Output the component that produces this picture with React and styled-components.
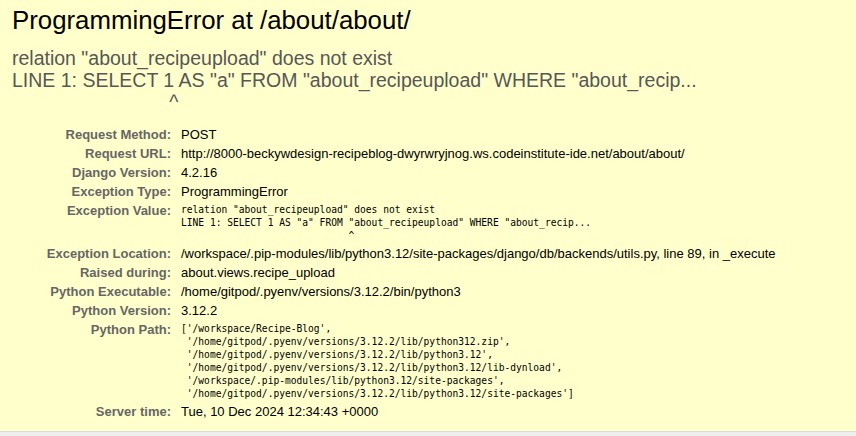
import React from 'react'
import styled, { createGlobalStyle } from 'styled-components'

const GlobalStyle = createGlobalStyle`
    html, body {
        margin: 0;
        padding: 0;
    }
    body {
        background: #eee;
        color: #000;
        font: 13px 'Liberation Sans', Arial, sans-serif;
    }
`

const Summary = styled.div`
    background: #ffc;
    border-bottom: 1px solid #ddd;
    padding: 5px 12px 10px 12px;
`

const Title = styled.h1`
    margin: 0;
    font-size: 25.8px;
    font-weight: normal;
    line-height: 30px;
`

const ExceptionValue = styled.pre`
    margin: 12px 0 12px 0;
    font-family: 'Liberation Sans', Arial, sans-serif;
    font-size: 19.5px;
    line-height: 22px;
    color: #575757;
    white-space: pre-wrap;
`

const Meta = styled.div`
    display: grid;
    grid-template-columns: 159px 1fr;
    column-gap: 10px;
    line-height: 15px;
`

const Label = styled.div`
    padding: 2px 0;
    text-align: right;
    font-weight: bold;
    color: #666;
`

const Value = styled.div`
    padding: 2px 0;
`

const Code = styled.pre`
    margin: 0;
    font-family: 'DejaVu Sans Mono', 'Liberation Mono', monospace;
    font-size: 9.6px;
    line-height: 13px;
    white-space: pre-wrap;
`

const valueText = `relation "about_recipeupload" does not exist
LINE 1: SELECT 1 AS "a" FROM "about_recipeupload" WHERE "about_recip...
                             ^`

const sysPath = `['/workspace/Recipe-Blog',
 '/home/gitpod/.pyenv/versions/3.12.2/lib/python312.zip',
 '/home/gitpod/.pyenv/versions/3.12.2/lib/python3.12',
 '/home/gitpod/.pyenv/versions/3.12.2/lib/python3.12/lib-dynload',
 '/workspace/.pip-modules/lib/python3.12/site-packages',
 '/home/gitpod/.pyenv/versions/3.12.2/lib/python3.12/site-packages']`

const ROWS = [
    ['Request Method:', 'POST'],
    ['Request URL:', 'http://8000-beckywdesign-recipeblog-dwyrwryjnog.ws.codeinstitute-ide.net/about/about/'],
    ['Django Version:', '4.2.16'],
    ['Exception Type:', 'ProgrammingError'],
    ['Exception Value:', valueText, true],
    ['Exception Location:', '/workspace/.pip-modules/lib/python3.12/site-packages/django/db/backends/utils.py, line 89, in _execute'],
    ['Raised during:', 'about.views.recipe_upload'],
    ['Python Executable:', '/home/gitpod/.pyenv/versions/3.12.2/bin/python3'],
    ['Python Version:', '3.12.2'],
    ['Python Path:', sysPath, true],
    ['Server time:', 'Tue, 10 Dec 2024 12:34:43 +0000']
]

const App = () => (
    <>
        <GlobalStyle />
        <Summary>
            <Title>ProgrammingError at /about/about/</Title>
            <ExceptionValue>{ valueText }</ExceptionValue>
            <Meta>
                { ROWS.map(([label, value, code]) => (
                    <React.Fragment key={ label }>
                        <Label>{ label }</Label>
                        <Value>
                            { code ? <Code>{ value }</Code> : value }
                        </Value>
                    </React.Fragment>
                )) }
            </Meta>
        </Summary>
    </>
)

export default App
